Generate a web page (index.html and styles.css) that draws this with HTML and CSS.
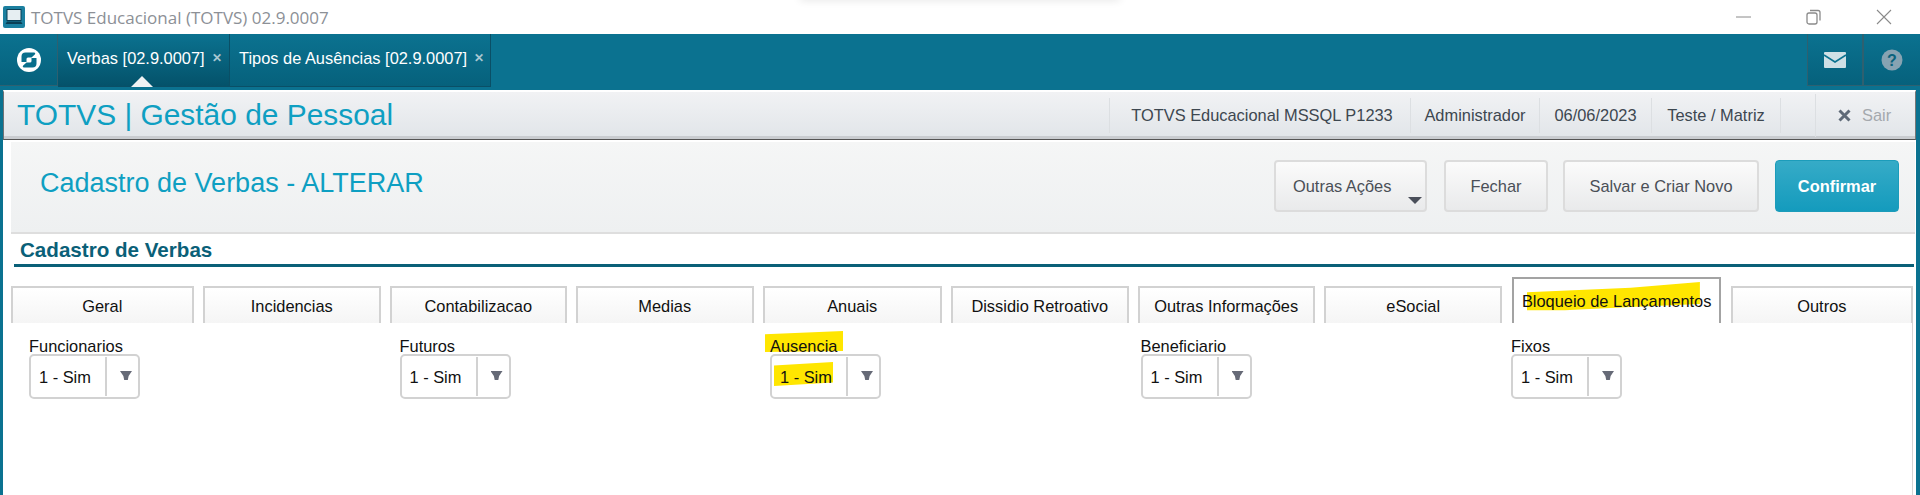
FILE: index.html
```html
<!DOCTYPE html>
<html lang="pt-BR">
<head>
<meta charset="utf-8">
<title>TOTVS Educacional</title>
<link rel="stylesheet" href="styles.css">
</head>
<body>
<div class="smudge"></div>
<header class="titlebar">
  <svg class="app-icon" width="22" height="22" viewBox="0 0 22 22"><rect width="22" height="22" rx="2" fill="#1b7f9f"/><rect x="4" y="3.500" width="14" height="11" fill="#e6eef2" stroke="#0b3f55" stroke-width="1"/><path d="M2.500 18h17l-1.500-2.500H4z" fill="#0b3f55"/></svg>
  <span class="app-title">TOTVS Educacional (TOTVS) 02.9.0007</span>
  <div class="winctl">
    <svg width="16" height="16" viewBox="0 0 16 16"><path d="M0 8h15" stroke="#8a8a8a" fill="none"/></svg>
    <svg width="16" height="16" viewBox="0 0 16 16"><rect x="1" y="4" width="10" height="11" rx="2" fill="none" stroke="#8a8a8a" stroke-width="1.300"/><path d="M4 1.500h8a2 2 0 0 1 2 2v8" fill="none" stroke="#8a8a8a" stroke-width="1.300"/></svg>
    <svg width="16" height="16" viewBox="0 0 16 16"><path d="M1 1l14 14M15 1L1 15" stroke="#8a8a8a" stroke-width="1.100" fill="none"/></svg>
  </div>
</header>

<nav class="tabbar">
  <div class="navbtn logo-btn">
    <svg width="26" height="26" viewBox="0 0 26 26"><circle cx="13" cy="13" r="12" fill="#fff"/><path d="M5.500 15V9.500Q5.500 5.500 9.500 5.500H18Q20 5.800 18.800 7.500L15.500 10.500H12Q10.500 10.500 10.500 12V15Z" fill="#096f8c"/><path d="M20.500 11V16.500Q20.500 20.500 16.500 20.500H8Q6 20.200 7.200 18.500L10.500 15.500H14Q15.500 15.500 15.500 14V11Z" fill="#096f8c"/></svg>
  </div>
  <div class="apptab active">
    <span>Verbas [02.9.0007]</span><span class="tabx">✕</span>
    <i class="caret"></i>
  </div>
  <div class="apptab">
    <span>Tipos de Ausências [02.9.0007]</span><span class="tabx">✕</span>
  </div>
  <div class="navspacer"></div>
  <div class="navbtn mail-btn">
    <svg width="22" height="16" viewBox="0 0 22 16"><rect width="22" height="16" rx="1" fill="#cfe0e6"/><path d="M0 3l11 7 11-7" fill="none" stroke="#0b7290" stroke-width="1.500"/></svg>
  </div>
  <div class="navbtn help-btn">
    <svg width="22" height="22" viewBox="0 0 22 22"><circle cx="11" cy="11" r="10.500" fill="#87a3b2"/><text x="11" y="16.500" class="help-q">?</text></svg>
  </div>
</nav>

<main class="frame">
  <section class="apphead">
    <h1 class="brand">TOTVS | Gestão de Pessoal</h1>
    <ul class="info">
      <li class="info-db">TOTVS Educacional MSSQL P1233</li>
      <li class="info-user">Administrador</li>
      <li class="info-date">06/06/2023</li>
      <li class="info-branch">Teste / Matriz</li>
    </ul>
    <div class="logout">
      <svg width="13" height="13" viewBox="0 0 13 13"><path d="M1.500 1.500l10 10M11.500 1.500l-10 10" stroke="#5f6a78" stroke-width="3" fill="none"/></svg>
      <span>Sair</span>
    </div>
  </section>

  <section class="pagehead">
    <h2 class="pagetitle">Cadastro de Verbas - ALTERAR</h2>
    <div class="actions">
      <button class="btn btn-more">Outras Ações<i class="btn-arrow"></i></button>
      <button class="btn btn-close">Fechar</button>
      <button class="btn btn-save">Salvar e Criar Novo</button>
      <button class="btn btn-primary">Confirmar</button>
    </div>
  </section>

  <section class="content">
    <h3 class="section-title">Cadastro de Verbas</h3>
    <div class="formtabs">
      <div class="ftab">Geral</div>
      <div class="ftab">Incidencias</div>
      <div class="ftab">Contabilizacao</div>
      <div class="ftab">Medias</div>
      <div class="ftab">Anuais</div>
      <div class="ftab">Dissidio Retroativo</div>
      <div class="ftab">Outras Informações</div>
      <div class="ftab">eSocial</div>
      <div class="ftab ftab-active"><span class="marked"><i class="ink ink-tab"></i>Bloqueio de Lançamentos</span></div>
      <div class="ftab">Outros</div>
    </div>
    <div class="fields">
      <div class="field"><label>Funcionarios</label><div class="select"><span class="sel-val">1 - Sim</span><span class="sel-arrow"><i></i></span></div></div>
      <div class="field"><label>Futuros</label><div class="select"><span class="sel-val">1 - Sim</span><span class="sel-arrow"><i></i></span></div></div>
      <div class="field"><label class="marked"><i class="ink ink-label"></i>Ausencia</label><div class="select"><span class="sel-val marked"><i class="ink ink-val"></i>1 - Sim</span><span class="sel-arrow"><i></i></span></div></div>
      <div class="field"><label>Beneficiario</label><div class="select"><span class="sel-val">1 - Sim</span><span class="sel-arrow"><i></i></span></div></div>
      <div class="field"><label>Fixos</label><div class="select"><span class="sel-val">1 - Sim</span><span class="sel-arrow"><i></i></span></div></div>
    </div>
  </section>
</main>
</body>
</html>
```

FILE: styles.css
```css
* { box-sizing: border-box; }
html, body { margin: 0; height: 100%; overflow: hidden; }
body {
  display: flex; flex-direction: column; position: relative;
  background: #fff; color: #111;
  font-family: "Liberation Sans", Arial, sans-serif; font-size: 16.400px;
}
h1, h2, h3, ul { margin: 0; padding: 0; font-weight: normal; list-style: none; }

.smudge { position: absolute; left: 800px; top: -6px; width: 320px; height: 6px; box-shadow: 0 0 8px rgba(0,0,0,.12); }

.titlebar { height: 34px; flex: none; display: flex; align-items: center; padding-left: 3px; background: #fff; }
.app-icon { flex: none; }
.app-title { margin-left: 6px; font-family: "Open Sans", sans-serif; font-size: 17px; color: #8c9096; }
.winctl { margin-left: auto; display: flex; gap: 54px; padding-right: 28px; }

.tabbar { height: 56px; flex: none; display: flex; background: #0b7290; color: #fff; }
.navbtn {
  height: 52px; display: flex; align-items: center; justify-content: center;
  background: linear-gradient(#0b7290, #06617c);
  border-right: 1px solid #2e6070; border-bottom: 1px solid #2e6070;
}
.logo-btn { width: 58px; }
.mail-btn { width: 56px; border-left: 1px solid #2e6070; }
.help-btn { width: 57px; border-left: 1px solid #2e6070; border-right: 0; }
.navspacer { flex: 1; }
.help-q { font: bold 16px "Liberation Sans", sans-serif; fill: #0b627c; text-anchor: middle; }

.apptab {
  position: relative; height: 53px; display: flex; align-items: center;
  padding: 0 0 4px 9px;
  background: linear-gradient(#0b7290, #06617c);
  border-right: 1px solid #0a4f66; border-bottom: 1px solid #0a4f66;
}
.apptab:nth-of-type(2) { width: 172px; }
.apptab:nth-of-type(3) { width: 261px; }
.apptab.active { background: linear-gradient(#0b7290, #04526a); }
.tabx { margin-left: 7px; font-size: 12px; color: #a9c7d2; font-weight: bold; }
.caret {
  position: absolute; left: 73px; bottom: -1px; width: 0; height: 0;
  border-left: 11px solid transparent; border-right: 11px solid transparent; border-bottom: 11px solid #f0f2f3;
}

.frame { flex: 1; display: flex; flex-direction: column; background: #fff; border-left: 3px solid #0b7290; border-right: 4px solid #0b7290; min-height: 0; }

.apphead {
  height: 50px; flex: none; display: flex; align-items: center;
  border: 1px solid #777; border-top: 2px solid #fff; border-left: 1px solid #6f7275;
  border-bottom: 1px solid #555;
  box-shadow: inset 0 -3px 0 #c9ccd0;
  background: linear-gradient(#f1f2f4, #e1e5e9);
}
.brand { margin-left: 13px; padding-bottom: 2px; font-size: 29.900px; color: #0e9fc2; white-space: nowrap; }
.info { margin-left: auto; display: flex; height: 35px; align-items: stretch; }
.info li { display: flex; align-items: center; justify-content: center; border-left: 1px solid #dcdfe2; color: #3d4750; }
.info-db { width: 301px; padding-left: 4px; }
.info-user { width: 129px; }
.info-date { width: 112px; }
.info-branch { width: 130px; border-right: 1px solid #dcdfe2; }
.logout { width: 100px; margin-left: 34px; height: 43px; border-left: 1px solid #dcdfe2; display: flex; align-items: center; gap: 11px; padding-left: 22px; color: #a4a8ad; }

.pagehead {
  height: 92px; flex: none; margin: 2px 1px 0 8px; display: flex; align-items: center; padding-left: 29px;
  background: linear-gradient(#f5f6f6, #eef0f1); border-bottom: 2px solid #dedede;
}
.pagetitle { font-size: 27px; color: #0e9fc2; margin-top: -8px; white-space: nowrap; }
.actions { margin-left: auto; padding-right: 16px; display: flex; gap: 16px; height: 52px; margin-top: -2px; }
.btn {
  position: relative; height: 52px; font: 16.400px "Liberation Sans", sans-serif; color: #4a4f57;
  border: 2px solid #dcdcdc; border-radius: 4px; background: linear-gradient(#fbfbfb, #e9eaeb); padding: 0;
}
.btn-more { width: 153px; text-align: left; padding-left: 17px; }
.btn-close { width: 104px; margin-left: 1px; }
.btn-save { width: 196px; margin-left: -1px; }
.btn-primary { width: 124px; font-weight: bold; color: #fff; border: 1px solid #1c9cba; background: linear-gradient(#36abc7, #149bbd); }
.btn-arrow { position: absolute; right: 3px; bottom: 6px; width: 0; height: 0; border-left: 7px solid transparent; border-right: 7px solid transparent; border-top: 7px solid #4a4f5a; }

.content { flex: 1; padding-left: 8px; display: flex; flex-direction: column; min-height: 0; }
.section-title { height: 33px; flex: none; margin: 0 2px 0 3px; padding: 4px 0 0 6px; font-size: 20.600px; font-weight: bold; color: #0a6078; border-bottom: 3px solid #0a6078; }
.formtabs {
  display: grid; flex: none; height: 46px; margin-top: 10px; align-items: end;
  grid-template-columns: 182.600px 177.600px 176.600px 177.600px 178.600px 177.600px 176.600px 178.600px 209.600px 182px; column-gap: 9.400px;
}
.ftab {
  height: 37px; display: flex; align-items: center; justify-content: center; padding-top: 1px;
  border: 2px solid #d2d2d2; border-bottom: 0;
  background: linear-gradient(#fff, #f5f5f5);
}
.ftab-active { height: 46px; border-color: #a3a3a3; background: #fff; }

.fields { flex: 1; display: grid; grid-template-columns: repeat(5, 370.500px); padding: 12px 0 0 18px; margin-right: 3px; border-right: 1px solid #d5d5d5; }
.field label { display: block; line-height: 22px; height: 19px; }
.select { width: 111px; height: 45px; display: flex; border: 2px solid #d2d2d2; border-radius: 5px; background: #fff; }
.sel-val { width: 74px; padding-left: 8px; line-height: 43px; align-self: flex-start; height: 41px; }
.sel-arrow { flex: 1; margin: 1px 0; border-left: 2px solid #d2d2d2; display: flex; align-items: center; justify-content: center; padding-left: 7px; }
.sel-arrow i { width: 12px; height: 9px; margin-top: -2px; background: #666a77; clip-path: polygon(0 0, 100% 0, 72% 55%, 65% 100%, 35% 100%, 28% 55%); }

.marked { position: relative; z-index: 0; }
.ink { position: absolute; z-index: -1; background: #ffe600; }
.ink-tab { left: 5px; top: -10px; width: 173px; height: 29px; clip-path: polygon(0 35%, 60% 20%, 100% 0, 100% 76%, 60% 86%, 22% 97%, 0 97%); }
.ink-label { left: -5px; top: -4px; width: 78px; height: 21px; clip-path: polygon(0 15%, 100% 0, 100% 95%, 0 100%); }
.ink-val { left: 2px; top: 6px; width: 59px; height: 24px; clip-path: polygon(0 15%, 100% 0, 100% 85%, 0 100%); }
```
